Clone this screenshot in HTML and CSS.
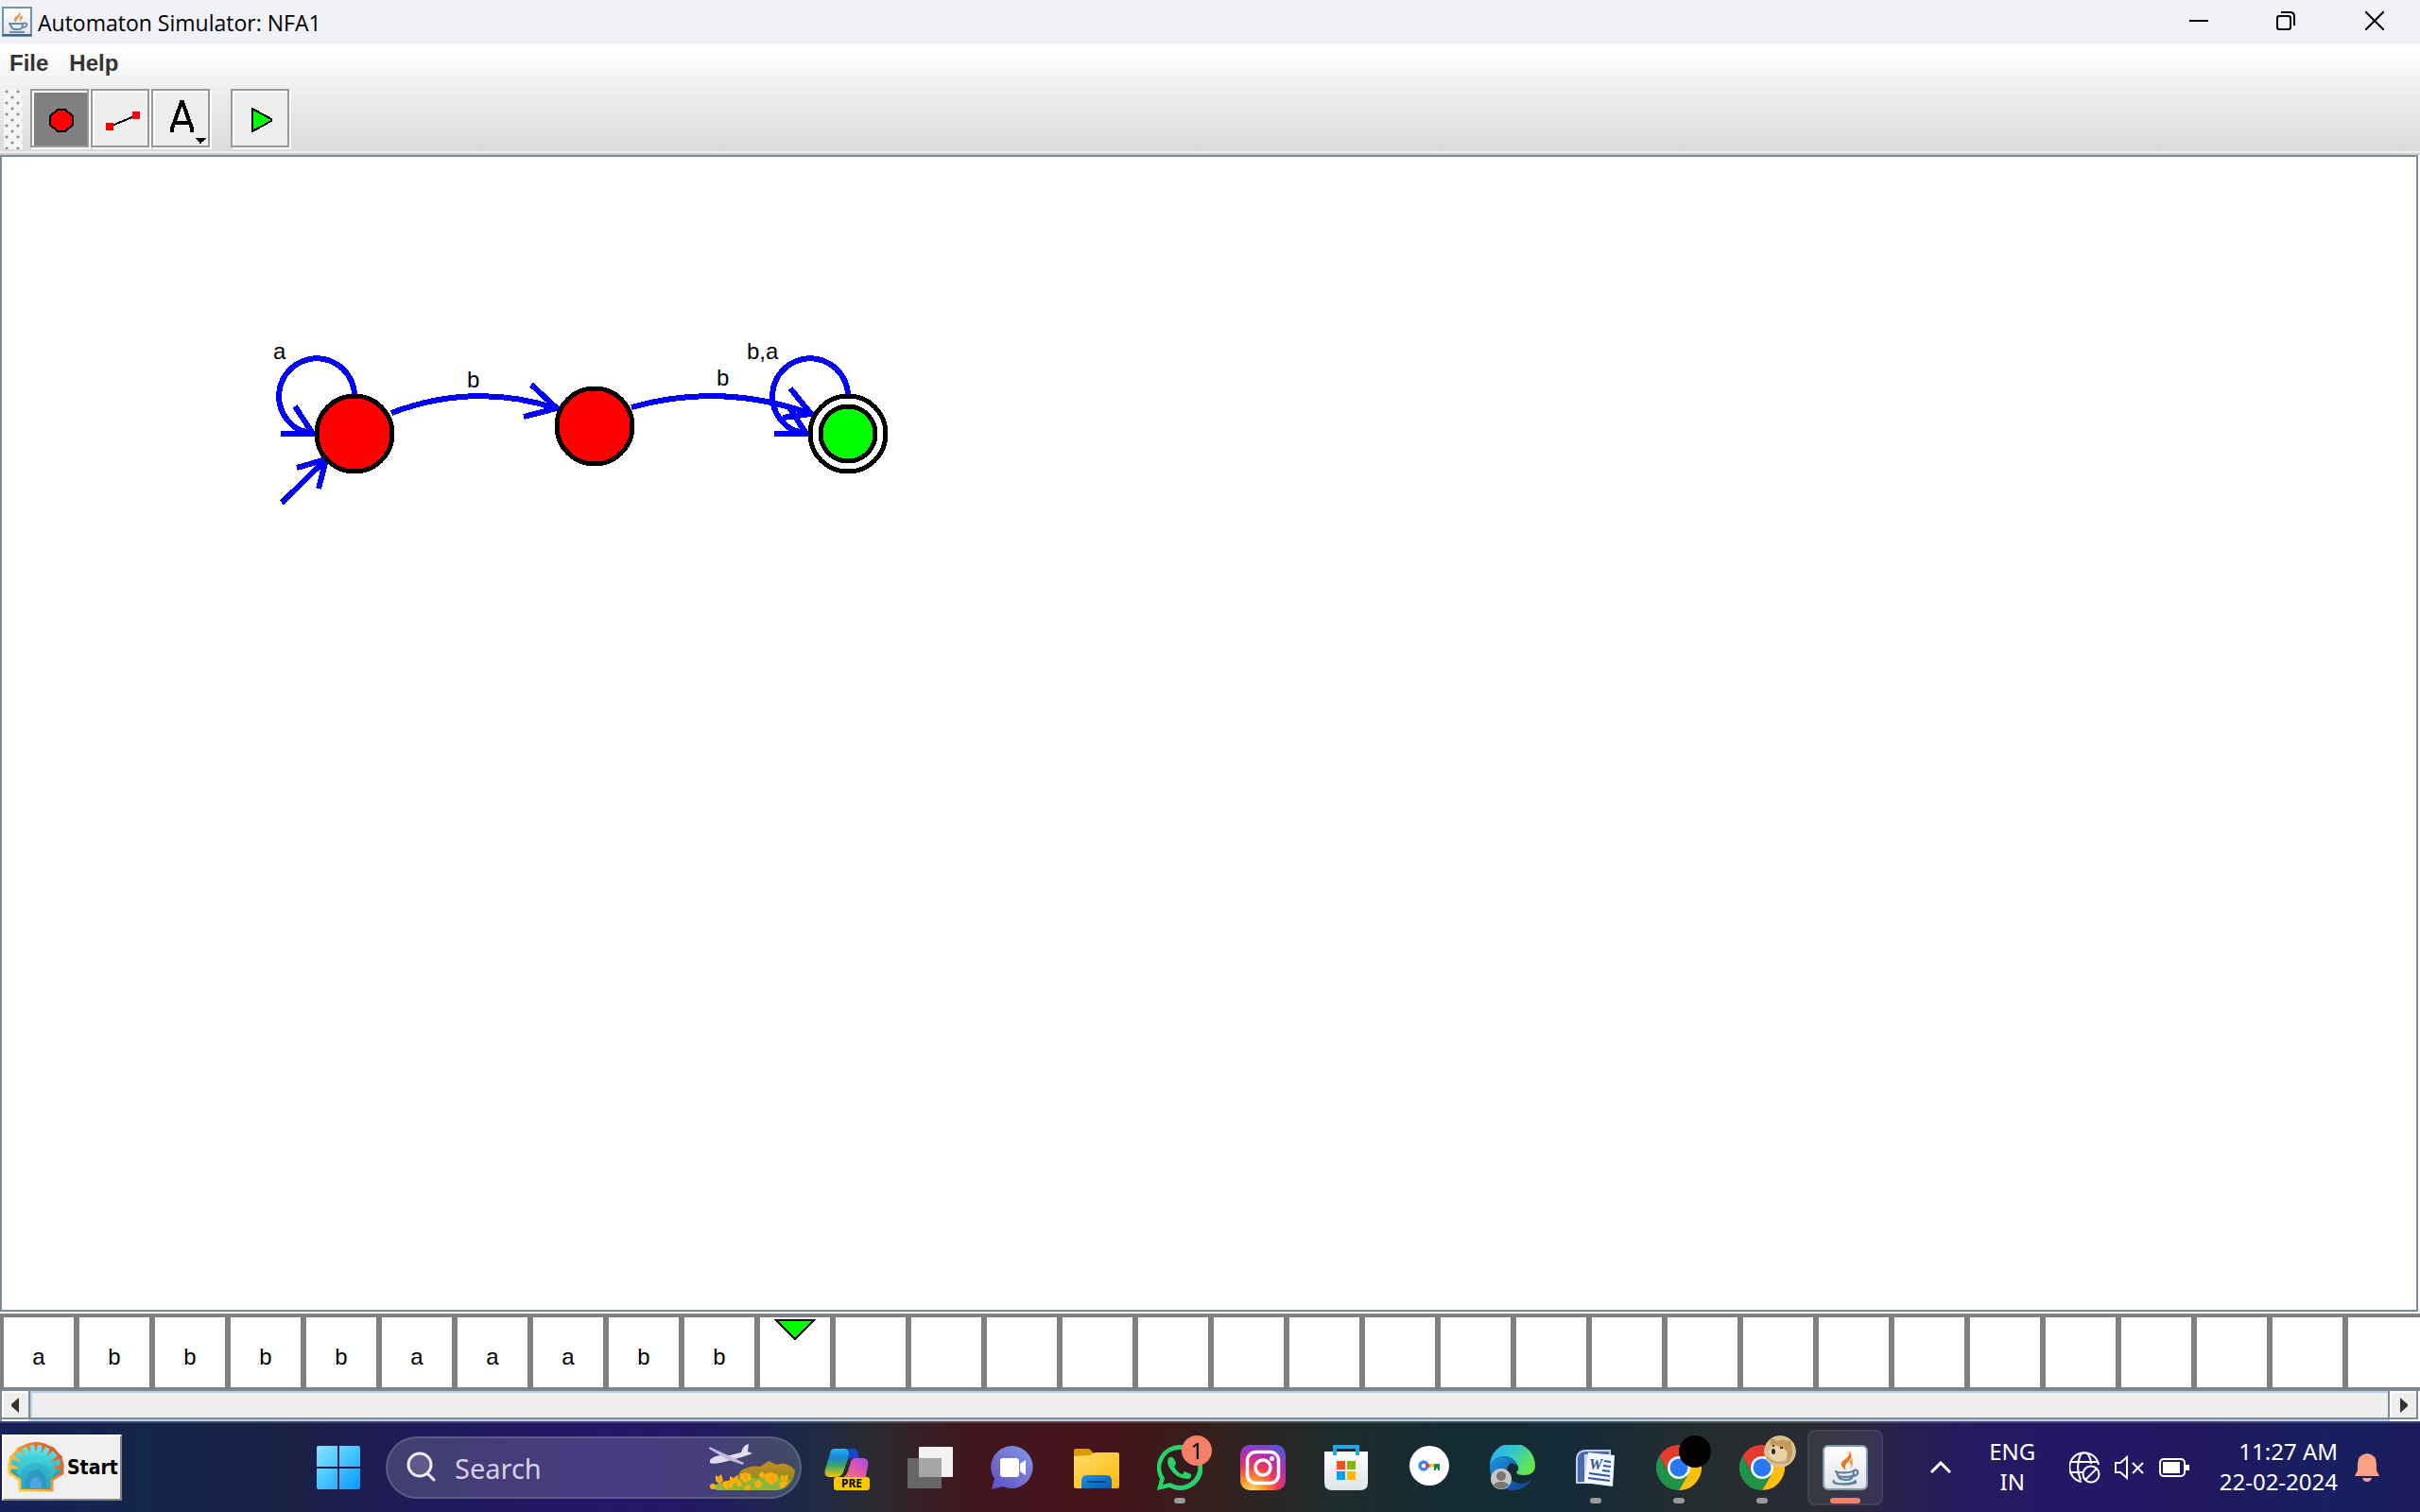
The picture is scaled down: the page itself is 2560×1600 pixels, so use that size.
FILE: index.html
```html
<!DOCTYPE html>
<html lang="en">
<head>
<meta charset="utf-8">
<title>Automaton Simulator: NFA1</title>
<link rel="stylesheet" href="styles.css">
</head>
<body>
<svg class="defs" aria-hidden="true">
  <defs>
    <linearGradient id="tile" x1="0" y1="0" x2="0" y2="1"><stop offset="0" stop-color="#fff"/><stop offset="1" stop-color="#dfe3e8"/></linearGradient>
    <linearGradient id="win" gradientUnits="userSpaceOnUse" x1="0" y1="0" x2="48" y2="48"><stop offset="0" stop-color="#8be3ff"/><stop offset=".45" stop-color="#4cc9ff"/><stop offset="1" stop-color="#0594ff"/></linearGradient>
    <linearGradient id="shell" x1="0" y1="0" x2="0" y2="1"><stop offset="0" stop-color="#5ff4ff"/><stop offset=".45" stop-color="#3cc4cc"/><stop offset="1" stop-color="#0c6078"/></linearGradient>
    <linearGradient id="rim" gradientUnits="userSpaceOnUse" x1="0" y1="54" x2="56" y2="8"><stop offset="0" stop-color="#ffe13a"/><stop offset=".4" stop-color="#fbb534"/><stop offset=".7" stop-color="#f07c2e"/><stop offset="1" stop-color="#e0502a"/></linearGradient>
    <linearGradient id="cop1" x1="0" y1="0" x2="0" y2="1"><stop offset="0" stop-color="#2bb8f5"/><stop offset=".3" stop-color="#1582d8"/><stop offset=".6" stop-color="#3fa66a"/><stop offset="1" stop-color="#f5c800"/></linearGradient>
    <linearGradient id="cop2" x1="1" y1="0" x2="0" y2="1"><stop offset="0" stop-color="#a348f0"/><stop offset=".5" stop-color="#e95a9c"/><stop offset="1" stop-color="#ff8a50"/></linearGradient>
    <linearGradient id="chat" x1="1" y1="0" x2="0" y2="1"><stop offset="0" stop-color="#7f9df0"/><stop offset=".5" stop-color="#7672d0"/><stop offset="1" stop-color="#5b50c8"/></linearGradient>
    <linearGradient id="fold" x1="0" y1="0" x2="1" y2="1"><stop offset="0" stop-color="#ffdc6a"/><stop offset="1" stop-color="#fcb90e"/></linearGradient>
    <linearGradient id="tray" x1="0" y1="0" x2="1" y2="1"><stop offset="0" stop-color="#1596e0"/><stop offset="1" stop-color="#0458b0"/></linearGradient>
    <radialGradient id="insta" cx=".25" cy="1.05" r="1.15"><stop offset="0" stop-color="#ffe07a"/><stop offset=".25" stop-color="#fb9a2c"/><stop offset=".5" stop-color="#ee3a5a"/><stop offset=".75" stop-color="#b52cb0"/><stop offset="1" stop-color="#5a55d8"/></radialGradient>
    <linearGradient id="edge" x1="0" y1="0" x2="1" y2=".5"><stop offset="0" stop-color="#2aa9ee"/><stop offset=".5" stop-color="#2fc7cf"/><stop offset="1" stop-color="#66e64e"/></linearGradient>
    <linearGradient id="edge2" x1="0" y1="0" x2="1" y2="1"><stop offset="0" stop-color="#1c94e0"/><stop offset="1" stop-color="#0f3f94"/></linearGradient>
    <linearGradient id="hill" x1="0" y1="0" x2="0" y2="1"><stop offset="0" stop-color="#d08a1c"/><stop offset=".6" stop-color="#8d8f24"/><stop offset="1" stop-color="#6d8d24"/></linearGradient>
    <symbol id="java" viewBox="0 0 48 48">
      <rect x="1" y="1" width="46" height="46" rx="5" fill="url(#tile)" stroke="#7f9bb3" stroke-width="2"/>
      <path d="M25 27c-7-5-7-8-1-12 4-3 5-5 4-9 4 5 3 8-1 12-3 3-4 5-2 9z" fill="#e87722"/>
      <path d="M28 26c3-3 3-5 0-8 1-2 3-3 4-4-2 4 3 7-4 12z" fill="#f0934a"/>
      <g fill="none" stroke="#5b7f9b" stroke-width="2.2" stroke-linecap="round"><path d="M14 28c2 2 17 2 19-1M15 29c1 4 2 6 4 7 4 1 9 1 11 0 2-2 3-4 3-7M33 27c6-2 6 5-1 6M17 33c4 1 10 1 14 0M12 38c-4 4 19 5 23 0M16 41c6 1 12 1 19-1"/></g>
    </symbol>
    <symbol id="chrome" viewBox="0 0 48 48">
      <path d="M3.2 12A24 24 0 0 1 44.8 12H24L13.600 30z" fill="#e33b2e"/>
      <path d="M44.800 12A24 24 0 0 1 24 48L34.400 30 24 12z" fill="#fbbf12"/>
      <path d="M24 48A24 24 0 0 1 3.200 12L13.600 30 34.400 30z" fill="#1f9448"/>
      <circle cx="24" cy="24" r="12" fill="#fff"/><circle cx="24" cy="24" r="9.500" fill="#2979f2"/>
    </symbol>
    <g id="loop">
      <path d="M375 417A40 40 0 1 0 317 455L331 459M312 430L331 459M297 459H333"/>
    </g>
  </defs>
</svg>

<header class="titlebar">
  <svg class="app-icon" viewBox="0 0 32 32" aria-hidden="true">
    <rect x="1" y="1" width="30" height="30" fill="url(#tile)" stroke="#6f93b0" stroke-width="2"/>
    <path d="M1 30H31" stroke="#3f627e" stroke-width="2"/>
    <path d="M15 17c-4-4-1-6 1-7 2-2 3-3 3-5 2 4-1 6-2 7-2 2-2 3-2 5zM18 16c3-2 1-4 1-5 1-1 2-1 3-2-1 2 1 5-4 7z" fill="#ee8a3c"/>
    <path d="M7 18H23M9 19Q10 23 13 24H19Q22 23 22 19M22 18C28 16 28 22 21 22M8 27H24" fill="none" stroke="#6c8ba6" stroke-width="2"/>
  </svg>
  <h1 class="title">Automaton Simulator: NFA1</h1>
  <div class="window-controls">
    <button class="wbtn" aria-label="Minimize"><svg width="20" height="20"><path d="M0 10H20" /></svg></button>
    <button class="wbtn" aria-label="Restore"><svg width="20" height="20"><rect x="1" y="5" width="14" height="14" rx="2"/><path d="M5 1H15Q19 1 19 6V15"/></svg></button>
    <button class="wbtn" aria-label="Close"><svg width="20" height="20"><path d="M0 0L20 20M20 0L0 20"/></svg></button>
  </div>
</header>

<div class="chrome-bar">
  <nav class="menubar">
    <button class="menu">File</button>
    <button class="menu">Help</button>
  </nav>
  <div class="toolbar" role="toolbar" aria-label="Tools">
    <div class="grip"></div>
    <button class="tool selected" aria-label="State tool"><svg viewBox="0 0 58 58"><path d="M27 20H35L43 27V36L35 43H27L19 36V27z" fill="red" stroke="#000" stroke-width="2"/></svg></button>
    <button class="tool" aria-label="Transition tool"><svg viewBox="0 0 58 58"><path d="M18 38L44 27" stroke="#000" stroke-width="2"/><path d="M14 34h8v8h-8zM42 22h8v8h-8z" fill="red"/></svg></button>
    <button class="tool" aria-label="Text tool"><svg viewBox="0 0 58 58"><path d="M20 44V40L30 12L31 12L41 40V44M23 34H39" fill="none" stroke="#000" stroke-width="4"/><path d="M44 50H56L52 54H51V56H49V54H48z"/></svg></button>
    <button class="tool run" aria-label="Run"><svg viewBox="0 0 58 58"><path d="M21 19L41 30V32L21 43z" fill="#0f0" stroke="#000" stroke-width="2"/></svg></button>
  </div>
</div>

<main class="canvas">
  <svg class="graph" viewBox="2 166 1000 400" width="1000" height="400" role="img" aria-label="NFA with three states">
    <g class="edges">
      <use href="#loop"/>
      <use href="#loop" x="522"/>
      <path d="M298 532L345 486M314 495L345 486L337 517"/>
      <path d="M414 437Q501 404 588 432M562 407L589 432L554 441M501 417V421"/>
      <path d="M668 431Q763 404 858 438M836 411L858 438L828 442"/>
    </g>
    <g class="states">
      <circle cx="375" cy="459" r="40"/>
      <circle cx="629" cy="451" r="40"/>
      <circle class="ring" cx="897" cy="459" r="40"/>
      <circle class="accept" cx="897" cy="459" r="29"/>
    </g>
    <g class="labels">
      <text x="289" y="380">a</text>
      <text x="494" y="410">b</text>
      <text x="790" y="380">b,a</text>
      <text x="758" y="408">b</text>
    </g>
  </svg>
</main>

<ol class="tape" aria-label="Input tape">
  <li>a</li><li>b</li><li>b</li><li>b</li><li>b</li><li>a</li><li>a</li><li>a</li><li>b</li><li>b</li>
  <li class="head"><svg width="44" height="24" aria-label="Tape head"><path d="M2 3H42L22 23z"/></svg></li>
  <li></li><li></li><li></li><li></li><li></li><li></li><li></li><li></li><li></li><li></li><li></li>
  <li></li><li></li><li></li><li></li><li></li><li></li><li></li><li></li><li></li><li class="last"></li>
</ol>

<div class="scrollbar">
  <button class="arrow" aria-label="Scroll left"><svg width="8" height="16"><path d="M8 0V16L0 9V7z"/></svg></button>
  <div class="thumb"></div>
  <button class="arrow right" aria-label="Scroll right"><svg width="8" height="16"><path d="M0 0V16L8 9V7z"/></svg></button>
</div>

<footer class="taskbar">
  <button class="start">
    <svg width="60" height="54" viewBox="0 0 60 54" aria-hidden="true">
      <path d="M13 51V40L2 33V24L4 16L12 7L21 3L30 1L39 3L48 7L56 16L58 24V33L47 40V51z" fill="url(#shell)" stroke="url(#rim)" stroke-width="3" stroke-linejoin="round"/>
      <path d="M28 1H32L30 9zM19 3L23 2L24 11zM41 3L37 2L36 11zM10 7L14 5L18 14zM50 7L46 5L42 14zM2 16L5 13L14 21zM58 16L55 13L46 21zM1 23L2 28L13 28zM59 23L58 28L47 28z" fill="url(#rim)" stroke="url(#rim)"/>
      <path d="M14 49V39L9 32Q12 15 30 14Q48 15 51 32L46 39V49z" fill="#3fd0dc" fill-opacity=".55"/>
      <path d="M15 49V38L14 34Q17 23 30 22Q43 23 46 34L45 38V49z" fill="#2fa9cf" fill-opacity=".6"/>
      <path d="M19 49V42Q20 30 30 29Q40 30 41 42V49z" fill="#2a93c4" fill-opacity=".7"/>
      <path d="M24 49V45Q25 38 30 37Q35 38 36 45V49z" fill="#5aa6ee" fill-opacity=".8"/>
    </svg>
    <span>Start</span>
  </button>

  <div class="apps">
    <button class="app" aria-label="Windows"><svg viewBox="0 0 48 48"><path d="M3 1H23V23H1V3Q1 1 3 1zM25 1H45Q47 1 47 3V23H25zM1 25H23V47H3Q1 47 1 45zM25 25H47V45Q47 47 45 47H25z" fill="url(#win)"/></svg></button>
    <label class="search">
      <svg class="lens" width="32" height="34" viewBox="0 0 32 34" aria-hidden="true"><circle cx="14" cy="14" r="12" fill="#fff" fill-opacity=".15"/><path d="M22 23L29 30" stroke-linecap="round"/></svg>
      <input type="text" placeholder="Search" aria-label="Search">
      <svg class="scene" width="92" height="50" viewBox="0 0 92 50" aria-hidden="true">
        <path d="M24 42L34 28Q44 22 54 24L63 18L72 22Q82 18 91 28Q90 42 78 48H10z" fill="url(#hill)"/>
        <path d="M2 45Q30 33 50 36Q70 33 86 38Q82 48 72 49H10Q4 48 2 45z" fill="#8fb63c"/>
        <path d="M1 17Q6 11 22 12L34 9Q36 1 42 0L41 8L46 10Q36 14 16 19Q4 22 1 20z" fill="#e6dcf0"/>
        <path d="M1 3L37 20L36 22L18 16L0 5z" fill="#c0b7dd"/>
        <g fill="#ffae0a"><path d="M7 33L10 35L13 32L15 39L11 42L7 39zM22 34L26 36L30 33L31 39L26 42L22 39zM33 32L38 30L44 32L45 37L39 41L33 37zM15 40L20 39L26 41L24 46L19 48L15 45zM48 40L53 38L56 41L54 46L49 46zM59 32L66 30L73 33L72 39L66 43L59 38zM76 33L80 34L84 32L83 38L79 40L76 37zM75 41L80 38L84 41L79 46L75 46z"/><circle cx="4" cy="45" r="3"/><circle cx="41" cy="46" r="3"/><circle cx="56" cy="33" r="3"/><circle cx="32" cy="42" r="3"/></g>
        <path d="M10 34L12 40M38 31L40 38M66 31L68 40M20 40L21 46M80 35V39" stroke="#f58a06" fill="none"/>
      </svg>
    </label>
    <button class="app" aria-label="Copilot"><svg viewBox="0 0 48 48"><path d="M11 4H34Q28 5 26 12L20 29Q18 34 12 34H5Q-1 33 1 26L6 9Q7 4 11 4z" fill="url(#cop1)"/><path d="M22 4H31Q35 4 37 14H30Q26 14 25 16Q28 5 22 4z" fill="#1546d0"/><path d="M31 14H42Q48 15 46 23L43 38H12Q22 36 25 28L28 18Q29 14 33 14z" fill="url(#cop2)"/></svg><span class="pre">PRE</span></button>
    <button class="app" aria-label="Task view"><svg viewBox="0 0 48 48"><rect x="12" y="2" width="36" height="32" rx="1" fill="#f2f2f2"/><rect x="0" y="14" width="36" height="32" rx="1" fill="#666"/><path d="M12 14H36V34H12z" fill="#a6a6a6"/></svg></button>
    <button class="app" aria-label="Chat"><svg viewBox="0 0 48 48"><path d="M24 1A22.500 22.500 0 1 1 13 44L1 47V46L4 36A22.500 22.500 0 0 1 24 1z" fill="url(#chat)"/><rect x="10" y="14" width="20" height="20" rx="3" fill="#fff"/><path d="M31 20L37 16V32L31 28z" fill="#fff"/></svg></button>
    <button class="app" aria-label="File Explorer"><svg viewBox="0 0 48 48"><path d="M0 6Q0 4 2 4H15Q17 4 20 8V14H0z" fill="#dc9b00"/><path d="M0 12L18 11Q20 8 23 8H46Q48 8 48 10V44Q48 46 46 46H2Q0 46 0 44z" fill="url(#fold)"/><path d="M8 46V38Q8 32 14 32H34Q40 32 40 38V46z" fill="url(#tray)"/><path d="M14 39H34" stroke="#08408c" stroke-width="2"/></svg></button>
    <button class="app open" aria-label="WhatsApp"><svg viewBox="0 0 48 48"><path d="M24 0A24 24 0 1 1 13 45L0 48L3 36A24 24 0 0 1 24 0z" fill="#25d366"/><path d="M24 5A19 19 0 1 1 14 40L6 42L8 35A19 19 0 0 1 24 5z" fill="#341b1d"/><path d="M12 14Q16 11 18 15L20 19Q20 21 18 23Q22 30 27 31L29 28L36 31Q37 36 32 36Q20 36 13 24Q10 18 12 14z" fill="#25d366"/></svg><span class="badge">1</span></button>
    <button class="app" aria-label="Instagram"><svg viewBox="0 0 48 48"><rect width="48" height="48" rx="10" fill="url(#insta)"/><rect x="7.500" y="7.500" width="33" height="33" rx="9" fill="none" stroke="#fff" stroke-width="3.500"/><circle cx="24" cy="24" r="8" fill="none" stroke="#fff" stroke-width="3.500"/><circle cx="33.500" cy="14.500" r="2.500" fill="#fff"/></svg></button>
    <button class="app" aria-label="Microsoft Store"><svg viewBox="0 0 48 48"><path d="M1 7H47V40Q47 48 39 48H9Q1 48 1 40z" fill="url(#tile)"/><path d="M12 11V2H36V11" fill="none" stroke="#1fa9ec" stroke-width="4"/><path d="M14 17h9v9h-9z" fill="#f25022"/><path d="M25 17h9v9h-9z" fill="#7fba00"/><path d="M14 28h9v9h-9z" fill="#00a4ef"/><path d="M25 28h9v9h-9z" fill="#ffb900"/></svg></button>
    <button class="app" aria-label="Passwords"><svg viewBox="0 0 48 48"><circle cx="24" cy="22" r="21" fill="#fff"/><circle cx="18" cy="22" r="4" fill="none" stroke="#4285f4" stroke-width="3.500"/><path d="M20 22h6" stroke="#e33b2e" stroke-width="3"/><path d="M24 22h6" stroke="#fbbf12" stroke-width="3"/><path d="M29 20H35V27H33V25H31V27H29z" fill="#1f8a45"/></svg></button>
    <button class="app" aria-label="Edge"><svg viewBox="0 0 48 48"><path d="M0 22A24 24 0 0 1 48 22Q48 32 36 32Q29 32 28 29Q32 26 29 21Q25 12 14 12Q4 13 0 22z" fill="url(#edge)"/><path d="M0 22Q4 12 14 12Q27 13 30 23Q20 14 18 27Q18 40 34 41Q40 40 44 36Q38 48 24 48Q0 46 0 22z" fill="url(#edge2)"/><circle cx="12" cy="36" r="11" fill="#c8c6c4"/><circle cx="12" cy="33" r="5" fill="#777572"/><path d="M4 43Q5 39 12 39Q19 39 20 43Q12 50 4 43z" fill="#777572"/></svg></button>
    <button class="app open" aria-label="Word"><svg viewBox="0 0 48 48"><path d="M4 40V14Q5 6 14 6H39V40z" fill="#4a69ad" stroke="#c3cfe8" stroke-width="2"/><path d="M12 10H38V40H12z" fill="#c9d5ee"/><path d="M16 8L44 11L42 44L12 40z" fill="#f4f7fc"/><text class="word" x="24" y="26">W</text><path d="M33 17L40 18M32 22L40 23M31 27L39 28M17 30L39 33M16 35L39 38" stroke="#2d55a5" stroke-width="2"/></svg></button>
    <button class="app open" aria-label="Chrome, first profile"><svg viewBox="0 0 48 48"><use href="#chrome"/></svg><span class="avatar dark"></span></button>
    <button class="app open" aria-label="Chrome, second profile"><svg viewBox="0 0 48 48"><use href="#chrome"/></svg><svg class="avatar" viewBox="0 0 34 34"><circle cx="17" cy="17" r="17" fill="#d9c08c"/><path d="M6 10L8 2L13 6Q20 3 24 6L28 5L30 14Q31 22 26 28Q22 14 13 10z" fill="#c39a5a"/><path d="M5 17Q8 10 15 12Q24 13 25 20Q22 29 12 27Q5 24 5 17z" fill="#e6d2a4"/><ellipse cx="10" cy="17" rx="2" ry="3" fill="#2c2624"/><path d="M9 11h2M17 13h3" stroke="#4a3520" stroke-width="2"/><path d="M3 23Q12 33 27 27" fill="none" stroke="#a98850"/></svg></button>
    <button class="app open active" aria-label="Automaton Simulator"><svg viewBox="0 0 48 48"><use href="#java"/></svg></button>
  </div>

  <div class="systray">
    <button class="tray chevron" aria-label="Show hidden icons"><svg width="22" height="14"><path d="M1 12L11 2L21 12" stroke-width="3"/></svg></button>
    <button class="tray lang">ENG<br>IN</button>
    <button class="tray status" aria-label="Network, volume and battery">
      <svg width="34" height="34"><path d="M13 32A15.500 15.500 0 1 1 31 14M2 11H30M2 22H14M12 30Q6 17 12 3Q16 0 20 3Q23 8 23 13"/><circle cx="23" cy="24" r="8.500"/><path d="M17 30L29 18"/></svg>
      <svg width="32" height="26"><path d="M1 8H6L13 2V24L6 18H1zM19 8L30 19M30 8L19 19"/></svg>
      <svg width="34" height="22"><rect x="2" y="2" width="26" height="18" rx="4"/><path d="M5 5H23V17H5z" fill="#fff" stroke="none"/><path d="M29 8H33V14H29z" fill="#fff" stroke="none"/></svg>
    </button>
    <button class="tray clock"><time datetime="2024-02-22T11:27">11:27 AM<br>22-02-2024</time></button>
    <button class="tray bell" aria-label="Notifications"><svg width="26" height="32"><path d="M3 13Q3 2 13 1Q23 2 23 13V19L26 25H0L3 19zM8 27H18Q17 31 13 31Q9 31 8 27z" fill="#fba182" stroke="none"/></svg></button>
  </div>
</footer>
</body>
</html>
```
FILE: styles.css
```css
* { box-sizing: border-box; }

body {
  margin: 0;
  min-height: 100vh;
  display: flex;
  flex-direction: column;
  overflow: hidden;
  background: #fff;
  color: #000;
  font-family: "Liberation Sans", Arial, sans-serif;
  font-size: 24px;
}

button {
  margin: 0;
  padding: 0;
  border: 0;
  background: none;
  color: inherit;
  font: inherit;
}

svg { display: block; flex: none; }

.defs { position: absolute; width: 0; height: 0; }

/* Title bar */
.titlebar {
  display: flex;
  align-items: center;
  height: 46px;
  padding-left: 2px;
  background: #f0f2f8;
}
.app-icon { width: 32px; height: 32px; }
.title {
  margin: 0 0 0 6px;
  padding-top: 2px;
  font: 400 23px/32px "Open Sans", "Noto Sans", sans-serif;
}
.window-controls { display: flex; height: 100%; margin-left: auto; }
.wbtn {
  display: flex;
  justify-content: center;
  width: 92px;
  padding-top: 12px;
}
.wbtn:last-child { width: 96px; }
.wbtn svg { fill: none; stroke: #000; stroke-width: 2; }

/* Menu and toolbar */
.chrome-bar {
  height: 118px;
  border-bottom: 2px solid #ccc;
  background: linear-gradient(#fff 0, #fdfdfd 12px, #ececec 56px, #dadada 114px, #eee 114px);
}
.menubar {
  display: flex;
  gap: 22px;
  height: 46px;
  padding-left: 10px;
  color: #333;
  font-weight: 700;
}
.menu { height: 42px; line-height: 42px; }
.toolbar { display: flex; gap: 2px; padding: 2px 0 0 4px; }
.grip {
  width: 20px;
  height: 64px;
  margin-right: 6px;
  background-color: #f4f4f4;
  background-image: radial-gradient(circle, #8192a2 1px, transparent 2px), radial-gradient(circle, #8192a2 1px, transparent 2px);
  background-size: 12px 12px;
  background-position: -3px -3px, 3px 3px;
}
.tool {
  width: 62px;
  height: 62px;
  border: 2px solid #999;
  background: #eee;
  box-shadow: inset 2px 2px #fff, 2px 2px #fff;
}
.tool svg { width: 58px; height: 58px; shape-rendering: crispEdges; }
.tool.selected { background: #808080; }
.run { margin-left: 20px; }

/* Drawing canvas */
.canvas {
  flex: 1;
  min-height: 0;
  margin-right: 2px;
  margin-bottom: 2px;
  border: 2px solid #7a8a99;
  background: #fff;
}
.graph { shape-rendering: crispEdges; }
.edges { fill: none; stroke: #00f; stroke-width: 6; }
.states { fill: #f00; stroke: #000; stroke-width: 5; }
.states .ring { fill: #fff; }
.states .accept { fill: #0f0; }
.labels { font-size: 24px; }

/* Input tape */
.tape {
  display: flex;
  gap: 6px;
  height: 80px;
  margin: 0;
  padding: 4px 0 2px 4px;
  overflow: hidden;
  background: #808080;
  list-style: none;
}
.tape li {
  flex: none;
  width: 74px;
  background: #fff;
  line-height: 84px;
  text-align: center;
}
.tape .last { flex: 1 0 74px; }
.head { display: flex; justify-content: center; }
.head svg { fill: #0f0; stroke: #000; stroke-width: 2; shape-rendering: crispEdges; }

/* Horizontal scrollbar */
.scrollbar {
  display: flex;
  height: 34px;
  border-top: 2px solid #7a8a99;
  border-left: 2px solid #7a8a99;
}
.arrow {
  display: flex;
  align-items: center;
  justify-content: center;
  width: 28px;
  height: 30px;
  padding-top: 2px;
  border-bottom: 2px solid #7a8a99;
  background: #eee;
  box-shadow: inset 2px 2px #fff;
}
.arrow svg { fill: #333; }
.arrow.right { width: 30px; margin-right: 2px; padding-left: 2px; border-right: 2px solid #7a8a99; }
.thumb {
  flex: 1;
  height: 30px;
  border: 2px solid #7a8a99;
  border-top: 0;
  background: #eee;
  box-shadow: inset 2px 2px #b8cfe5, 0 2px #b8cfe5;
}

/* Taskbar */
.taskbar {
  display: flex;
  align-items: center;
  height: 96px;
  padding: 0 43px 0 2px;
  border-top: 2px solid rgb(255 255 255 / .16);
  background: linear-gradient(90deg, #16215a 0, #14264a 6%, #1a2145 12%, #1f1a58 17%, #261769 25%, #231a62 29%, #1c2a48 33%, #2b2a30 36%, #42161f 40%, #45141c 46%, #34201d 50%, #1f2c2c 55%, #142b33 60%, #152b38 65%, #242d30 70%, #2a2b33 75%, #261a60 81%, #231867 86%, #21185f 91%, #191f62 96%, #1b1c58 100%) border-box;
  color: #fff;
  font-family: "Noto Sans", sans-serif;
}
.start {
  display: flex;
  align-items: center;
  gap: 3px;
  width: 127px;
  height: 70px;
  padding-left: 4px;
  border: 2px solid #fff;
  border-right-color: #808080;
  border-bottom-color: #808080;
  background: #f0f0f0;
  color: #000;
  font: 700 21px "DejaVu Sans Condensed", "DejaVu Sans", sans-serif;
}
.apps { display: flex; align-items: center; margin-left: 185px; }
.app {
  position: relative;
  display: flex;
  align-items: center;
  justify-content: center;
  width: 88px;
  height: 80px;
}
.app > svg { width: 48px; height: 48px; }
.app.open::after {
  content: "";
  position: absolute;
  bottom: 2px;
  left: 38px;
  width: 12px;
  height: 6px;
  border-radius: 3px;
  background: #999;
}
.app.active { width: 80px; margin: 0 4px; border: 2px solid rgb(255 255 255 / .06); border-radius: 8px; background: rgb(255 255 255 / .07); }
.app.active::after { bottom: 0; left: 22px; width: 32px; background: #f5806a; }
.badge {
  position: absolute;
  top: 6px;
  left: 46px;
  width: 32px;
  height: 32px;
  border-radius: 50%;
  background: #f5806a;
  color: #000;
  font-size: 23px;
  line-height: 32px;
}
.app > .avatar { position: absolute; top: 6px; left: 46px; width: 34px; height: 34px; border-radius: 50%; }
.app > .avatar.dark { left: 44px; background: #040202; }
.pre {
  position: absolute;
  top: 50px;
  left: 30px;
  width: 38px;
  height: 14px;
  border-radius: 3px;
  background: #ffc800;
  color: #000;
  font: 700 12px/14px "Noto Sans", sans-serif;
}
.word { fill: #2d55a5; font: italic 700 16px "Liberation Serif", serif; text-anchor: middle; }

.search {
  display: flex;
  align-items: center;
  width: 440px;
  height: 66px;
  margin: 0 4px 0 6px;
  padding: 0 4px 0 20px;
  border: 2px solid rgb(255 255 255 / .14);
  border-radius: 33px;
  background: rgb(255 255 255 / .16);
}
.lens { fill: none; stroke: #eceaf4; stroke-width: 3; }
.search input {
  flex: 1;
  min-width: 0;
  padding: 0 0 0 19px;
  border: 0;
  background: none;
  color: #d6d2e6;
  font: 29px "Noto Sans", sans-serif;
}
.search input::placeholder { color: #d6d2e6; opacity: 1; }

.systray { display: flex; align-items: center; margin-left: auto; }
.tray { display: flex; align-items: center; font-size: 24px; line-height: 32px; }
.tray svg { fill: none; stroke: #fff; stroke-width: 2; }
.chevron { margin-right: 40px; }
.lang { justify-content: center; width: 50px; margin-right: 35px; padding-bottom: 2px; }
.status { gap: 14px; margin-right: 31px; }
.clock { text-align: right; margin-right: 18px; padding-bottom: 2px; }
```
